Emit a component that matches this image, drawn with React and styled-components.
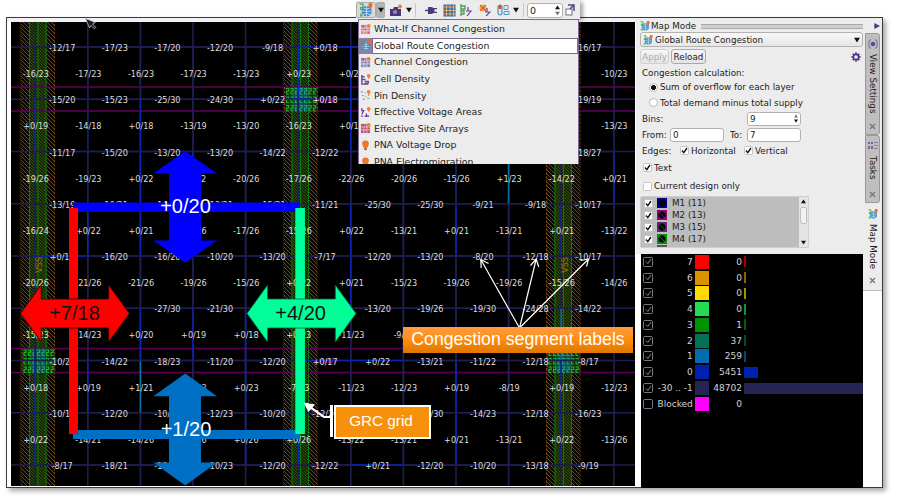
import React from 'react';
import styled, { createGlobalStyle, css } from 'styled-components';

const GlobalStyle = createGlobalStyle`
  * { box-sizing: border-box; }
  body { margin: 0; background: #fff; font-family: "DejaVu Sans", sans-serif; color: #222; overflow: hidden; }
  svg { display: block; flex: none; }
`;

/* ---------- congestion map ---------- */

const COL = (i) => 24.2 + i * 52.6;
const ROW = (i) => 25 + i * 52.25;

/* labels on horizontal edges, one list per grid line; a bare sign and digit colours the edge without a label */
const H_EDGES = [
  '-12/17 -17/23 -17/20 -12/20 -9/18 +0/18 +0 . . . -16/17',
  '-15/20 -15/23 -25/30 -24/30 +0/22 +0/18 +0 . . . -19/19',
  '-11/17 -15/20 -13/20 -13/20 -14/22 -12/22 . . . . -18/27',
  '-13/19 -10/21 -14/21 -13/21 -15/21 -11/21 -25/30 -25/30 -9/21 -9/18 -10/17',
  '+0/19 -16/20 -16/20 -10/20 -13/20 -7/17 -12/20 -13/20 -8/20 -12/18 -10/17',
  '. . -27/30 -21/30 . . -13/20 -19/26 -19/30 -24/28 -14/22',
  '-10/20 -14/22 -18/23 -11/20 -12/20 +0/17 +0/22 -13/21 -11/22 -12/18 -8/17',
  '-10/18 -12/20 -10/20 -12/23 -10/20 -12/20 . -25/30 -14/23 -12/18 -16/23',
  '-8/17 -18/21 -18/21 -10/23 -12/20 -12/22 +0/21 -12/20 -10/20 -13/18 -9/19',
].map((r) => r.split(' '));

/* labels on vertical edges, one list per row of cells */
const V_EDGES = [
  '-16/23 -17/23 -16/23 -17/23 -13/23 +0/23 +0/23 . . . . -10/23',
  '+0/19 -14/18 +0/18 -13/19 -13/20 -16/23 +0/19 . . . . -13/23',
  '-19/26 -19/23 +0/22 +0/22 -20/26 -17/26 -22/26 -20/26 -15/26 +1/23 -14/22 +0/21',
  '-16/24 +0/22 +0/21 -16/26 -17/26 -15/26 +0/22 -13/21 +0/21 -13/21 +0/21 -13/22',
  '-20/26 -21/26 -21/26 -19/26 -15/26 +0/22 +0/21 -15/23 -19/26 -19/26 -15/26 -14/26',
  '-15/23 -14/23 +0/20 +0/19 +0/18 +0/23 -11/23 -9/21 . . +1 .',
  '+0/18 +0/19 +1/21 -10/23 +0/23 -7/23 -11/23 -12/23 +0/19 -8/19 +0/19 -12/23',
  '+0/22 -14/21 -14/26 -15/26 +0/26 +0/26 -13/22 -13/21 +0/21 -13/21 +0/22 -13/26',
].map((r) => r.split(' '));

const edgeColor = (v) => (v.startsWith('+0') ? '#0a24b4' : v.startsWith('+1') ? '#0072a8' : '#1e1e52');

const MapLabel = styled.text`
  font: 8.1px "DejaVu Sans", sans-serif;
  fill: #dedede;
  text-anchor: middle;
`;
const CalloutNumber = styled.text`
  font: 20px "Liberation Sans", Arial, sans-serif;
  fill: ${(p) => p.$ink};
  text-anchor: middle;
`;

function Strap({ x }) {
  return (
    <g>
      <rect x={x} y="0" width="34.5" height="464" fill="url(#brown)" />
      <rect x={x + 8.5} y="0" width="17.5" height="464" fill="url(#green)" />
      <path d={`M${x + 9} 0V464M${x + 17.5} 0V464M${x + 25.5} 0V464`} stroke="#0b7b10" strokeWidth="1" />
      <path d={`M${x + 0.5} 0V464M${x + 34} 0V464`} stroke="#553000" strokeWidth="1" strokeDasharray="1 1" />
    </g>
  );
}

function ViaBlock({ x, y }) {
  const cells = [];
  for (let r = 0; r < 3; r++)
    for (let c = 0; c < 7; c++)
      cells.push(
        <path
          key={`${r}-${c}`}
          d={`M${x + 1.5 + c * 4.5} ${y + 1.5 + r * 8.5}h2.6v2.5h-2v3h2.4`}
          stroke={c > 1 && c < 5 ? '#1f9c8c' : '#18b41c'}
          strokeWidth="1.2"
          fill="none"
        />
      );
  return (
    <g>
      <rect x={x} y={y} width="33" height="24" fill="#123c12" fillOpacity=".75" />
      <rect x={x + 8} y={y} width="17" height="24" fill="#0f5c50" fillOpacity=".75" />
      {cells}
      <path d={`M${x} ${y}v24M${x + 33} ${y}v24`} stroke="#b01c50" strokeDasharray="2 2" />
    </g>
  );
}

function CongestionMap() {
  return (
    <svg width="624" height="464" viewBox="0 0 624 464">
      <defs>
        <pattern id="brown" width="4" height="4" patternUnits="userSpaceOnUse">
          <rect width="4" height="4" fill="#0c0700" />
          <path d="M-1 -1L5 5M-1 3L1 5M3 -1L5 1" stroke="#794604" strokeWidth="1" />
        </pattern>
        <pattern id="green" width="3" height="3" patternUnits="userSpaceOnUse">
          <rect width="3" height="3" fill="#062c04" />
          <path d="M-1 -1L4 4M-1 2L1 4M2 -1L4 1" stroke="#5f4808" strokeWidth=".8" />
        </pattern>
      </defs>
      <rect width="624" height="464" fill="#000" />
      <Strap x={9.5} />
      <Strap x={272} />
      <Strap x={535} />
      <path d="M0 65H624M0 89H624M0 326.5H624M0 350.5H624" stroke="#5e005a" strokeWidth="1.5" />
      <ViaBlock x={11} y={326.5} />
      <ViaBlock x={273.5} y={65} />
      <ViaBlock x={536} y={326.5} />
      <path d="M305 78h19M305 339h19" stroke="#6d0070" strokeWidth="5" strokeDasharray="2 1" />

      <g strokeWidth="1.6" fill="none">
        <path d={ROWS_BASE} stroke="#1e1e52" />
        {V_EDGES.map((row, r) =>
          row.map((v, c) => (
            <path key={`${r}-${c}`} d={`M${COL(c)} ${ROW(r)}V${ROW(r + 1)}`} stroke={edgeColor(v)} />
          ))
        )}
        {H_EDGES.map((row, r) =>
          row.map((v, c) => (
            <path key={`${r}-${c}`} d={`M${COL(c)} ${ROW(r)}H${COL(c + 1)}`} stroke={edgeColor(v)} />
          ))
        )}
      </g>

      <g fill="#a86800" fontFamily="DejaVu Sans" fontSize="8">
        <text transform="translate(31 243) rotate(-90)" textAnchor="middle">VSS</text>
        <text transform="translate(557 243) rotate(-90)" textAnchor="middle">VSS</text>
      </g>

      {H_EDGES.map((row, r) =>
        row.map((v, c) => v.length > 2 && (
          <MapLabel key={`${r}-${c}`} x={COL(c) + 27} y={ROW(r) + 4.2}>{v}</MapLabel>
        ))
      )}
      {V_EDGES.map((row, r) =>
        row.map((v, c) => v.length > 2 && (
          <MapLabel key={`${r}-${c}`} x={COL(c) + 0.6} y={ROW(r) + 30.2}>{v}</MapLabel>
        ))
      )}

      <rect x="62" y="180.5" width="227" height="9.5" fill="#00f" />
      <rect x="62" y="408" width="227" height="9" fill="#0070c4" />
      <rect x="58" y="186" width="9" height="226" fill="#f00" />
      <rect x="284.3" y="186" width="9.6" height="226" fill="#00ff99" />
      <path d="M174.3 129L206 151.6H190V218.4H206L174.3 240.8L142.3 218.4H158V151.6H142.3Z" fill="#00f" />
      <path d="M174.3 351.5L206 374.3H190V440.5H206L174.3 463.5L142.3 440.5H158V374.3H142.3Z" fill="#0070c4" />
      <path d="M9.6 291.5L30.2 263V277H97.6V263L118.4 291.5L97.6 320V306H30.2V320Z" fill="#f00" stroke="#300" strokeWidth=".8" />
      <path d="M236 291.5L256.6 263V277H324.3V263L345 291.5L324.3 320V306H256.6V320Z" fill="#00ff99" stroke="#063" strokeWidth=".8" />
      <CalloutNumber $ink="#fff" x="174.5" y="190.5">+0/20</CalloutNumber>
      <CalloutNumber $ink="#fff" x="175" y="413.8">+1/20</CalloutNumber>
      <CalloutNumber $ink="#111" x="63.5" y="298">+7/18</CalloutNumber>
      <CalloutNumber $ink="#111" x="289.6" y="297.5">+4/20</CalloutNumber>

      <g stroke="#fff" strokeWidth="1.2" fill="none">
        <path d="M508.5 306L469.8 237.5M470.2 246L469.8 237.5L477.5 241.5" />
        <path d="M508.5 306L525.2 237M519.5 243.5L525.2 237L527.7 245" />
        <path d="M508.5 306L577.5 237M569.5 238.5L577.5 237L575.5 244.5" />
      </g>
      <path d="M320 395H313L294.5 381.8" stroke="#fff" strokeWidth="2.2" fill="none" />
      <path d="M292.5 380.5L304 382.5L297.5 390Z" fill="#fff" />
    </svg>
  );
}
const ROWS_BASE =
  H_EDGES.map((_, r) => `M0 ${ROW(r)}H624`).join('') + V_EDGES[0].map((_, c) => `M${COL(c)} 0V464`).join('');

/* ---------- icons ---------- */

const Globe = ({ s = 11 }) => (
  <svg width={s} height={s} viewBox="0 0 12 12">
    <circle cx="6.5" cy="7" r="4.4" fill="#3386c8" />
    <path d="M2.2 7h8.6M6.5 2.7v8.6M3.5 4.3q3 1.5 6 0M3.5 9.7q3-1.5 6 0" stroke="#d5ecf8" strokeWidth=".7" fill="none" />
    <path d="M.5 1h3v3h-2v2M1.5 9v2h2" stroke="#45a849" strokeWidth="1.1" fill="none" />
    <path d="M8 1.7a1.8 1.8 0 113.6 0Q11.4 3.5 9.8 5.2Q8.2 3.5 8 1.7" fill="#f06a25" />
  </svg>
);
const GridIcon = ({ hot }) => (
  <svg width="11" height="11" viewBox="0 0 12 12">
    <rect x="1" y="1" width="10" height="10" fill={hot || '#7d90cb'} />
    <path d="M1 4.3H11M1 7.6H11M4.3 1V11M7.6 1V11" stroke="#e6e0ef" strokeWidth=".8" />
    <path d="M2 2h2v2M8 9h2M5 6h2" stroke="#d64b3a" strokeWidth="1.3" fill="none" />
    <circle cx="9.5" cy="2" r="2" fill="#f28232" />
  </svg>
);
const DotsIcon = ({ kind }) => (
  <svg width="11" height="11" viewBox="0 0 12 12">
    {kind === 'cell' && <path d="M2 1v10h7M2 3h3M2 6h4M5 8h4v2H5" stroke="#6b4591" strokeWidth="1.5" fill="none" />}
    {kind === 'pin' && <path d="M1 2h2M5 3h1M2 6h2M6 7h1M3 10h2M8 9h2M9 6h1" stroke="#7a8f7f" strokeWidth="1.3" />}
    {kind === 'volt' && <path d="M2 1v3h2L2 8M5 10h5M7 7v4M1 10h2" stroke="#5b3b91" strokeWidth="1.3" fill="none" />}
    <path d="M7.5 2a2 2 0 114 0Q11 4 9.5 5.8Q8 4 7.5 2" fill="#f07e3b" />
  </svg>
);
const PinIcon = () => (
  <svg width="11" height="11" viewBox="0 0 12 12">
    <path d="M2.3 4.2a3.7 3.7 0 117.4 0Q9.500 6.500 7.500 9V11h-3V9Q2.500 6.500 2.300 4.200" fill="#ef762c" />
    <path d="M4.700 9.500h2.600v1.500h-2.600z" fill="#a56b4a" />
  </svg>
);
const Gear = () => (
  <svg width="10" height="10" viewBox="0 0 10 10">
    <circle cx="5" cy="5" r="2.7" fill="none" stroke="#52357b" strokeWidth="1.7" />
    <path d="M5 .3v1.7M5 8v1.7M.3 5H2M8 5h1.7M1.7 1.7l1.2 1.2M7.1 7.1l1.2 1.2M8.3 1.7L7.1 2.9M1.7 8.3l1.2-1.2" stroke="#52357b" strokeWidth="1.6" />
  </svg>
);
const Triangle = ({ dir = 'down', size = 6, color = '#111' }) => (
  <svg width={size} height={size} viewBox="0 0 6 6">
    <path d={{ down: 'M0 .8h6L3 5.5z', up: 'M0 5.2h6L3 .5z', right: 'M.3 0v6L6 3z' }[dir]} fill={color} />
  </svg>
);

/* ---------- window ---------- */

const Page = styled.main`
  position: relative;
  width: 900px;
  height: 498px;
  padding: 17px 0 0 6px;
  background: #fff;
`;
const Window = styled.div`
  display: flex;
  width: 877px;
  height: 471px;
  border: 1px solid #3a3a3e;
  background: #fff;
  box-shadow: 3px 3px 5px rgba(0, 0, 0, 0.35);
`;
const MapPane = styled.section`
  position: relative;
  width: 629px;
  padding: 4px 0 0 4px;
  background: linear-gradient(#f2f2f6 0 4px, #fff 4px);
`;
const SidePane = styled.aside`
  display: flex;
  width: 246px;
  height: 470px;
`;
const SideColumn = styled.div`
  width: 227px;
  display: flex;
  flex-direction: column;
`;
const Cursor = styled.svg`
  position: absolute;
  left: 78px;
  top: 0;
`;

const SegmentCallout = styled.div`
  position: absolute;
  left: 396px;
  top: 309px;
  width: 230px;
  height: 26px;
  line-height: 25px;
  text-align: center;
  white-space: nowrap;
  color: #fff;
  font-family: "Liberation Sans", Arial, sans-serif;
  font-size: 17.7px;
  background: linear-gradient(#ff9c45, #ff8c0a 50%, #de7600);
`;
const GridCallout = styled.div`
  position: absolute;
  left: 323px;
  top: 387px;
  display: flex;
  gap: 1px;
  height: 34px;
`;
const CalloutBar = styled.span`
  width: 3px;
  height: 32px;
  background: #fff;
`;
const CalloutBox = styled.div`
  width: 97px;
  padding-right: 3px;
  border: 2px solid #fff;
  background: #f7900a;
  color: #fff;
  font: 15.3px/27px "Liberation Sans", Arial, sans-serif;
  text-align: center;
`;

/* ---------- map mode panel ---------- */

const Panel = styled.div`
  height: 236px;
  padding: 2px 0 0 4px;
  background: #ececec;
  font-size: 8.75px;
`;
const Line = styled.div`
  display: flex;
  align-items: center;
  height: ${(p) => p.$h}px;
  padding-left: ${(p) => p.$indent || 0}px;
  gap: ${(p) => p.$gap ?? 3}px;
  white-space: nowrap;
`;
const Grip = styled.span`
  flex: 1;
  height: 5px;
  margin-left: 4px;
  background: #cfcfcf;
  border: solid #aaa;
  border-width: 1px 0;
`;
const control = css`
  border: 1px solid #b4b2b0;
  border-radius: 3px;
`;
const Combo = styled.div`
  ${control}
  display: flex;
  align-items: center;
  gap: 2px;
  width: 223px;
  height: 15px;
  padding: 0 2px;
  background: linear-gradient(#f8f8f8, #e6e6e6);
`;
const Fill = styled.span`flex: 1;`;
const Button = styled.button`
  ${control}
  height: 15px;
  width: ${(p) => p.$w}px;
  padding: 0;
  font: 8.75px "DejaVu Sans", sans-serif;
  background: linear-gradient(#f6f6f6, #e4e4e4);
  color: #222;
  border-color: #aaa;
  &:disabled { color: #aaa; border-color: #d0d0d0; }
`;
const Radio = styled.span`
  width: 9px;
  height: 9px;
  border: 1px solid #bbb;
  border-radius: 50%;
  background: ${(p) => (p.$on ? 'radial-gradient(#111 0 2.2px, #fff 2.7px)' : '#fff')};
`;
const Field = styled.span`
  ${control}
  display: flex;
  align-items: center;
  justify-content: space-between;
  width: 54px;
  height: 14px;
  padding: 0 2px;
  background: #fff;
`;
const Spin = styled.span`
  display: flex;
  flex-direction: column;
  gap: 1px;
`;
const Caption = styled.span`
  width: ${(p) => p.$w}px;
`;
const BoxFrame = styled.span`
  display: flex;
  flex: none;
  align-items: center;
  justify-content: center;
  width: ${(p) => (p.$dark ? 10 : 9)}px;
  height: ${(p) => (p.$dark ? 10 : 9)}px;
  border: 1px solid ${(p) => (p.$dark ? '#77778c' : '#c4c4c4')};
  border-radius: 1.5px;
  background: ${(p) => (p.$dark ? '#000' : '#fff')};
`;
function Check({ on = true, dark }) {
  return (
    <BoxFrame $dark={dark}>
      {on && (
        <svg width="7" height="7" viewBox="0 0 7 7">
          <path d="M1 3.5L2.8 5.6L6 1" stroke={dark ? '#8c8c5c' : '#111'} strokeWidth={dark ? 1 : 1.4} fill="none" />
        </svg>
      )}
    </BoxFrame>
  );
}

const LayerBox = styled.div`
  display: flex;
  width: 169px;
  height: 52px;
  margin-top: 1px;
  border: 1px solid #cfcfcf;
  border-radius: 2px;
  background: #bdbdbd;
  overflow: hidden;
`;
const LayerList = styled.div`
  flex: 1;
  padding: 0 0 0 3px;
`;
const HiddenLayer = styled.div`
  width: 10px;
  height: 2px;
  margin-left: 13px;
  background: #555;
`;
const Swatch = styled.span`
  width: 10px;
  height: 10px;
  margin: 0 2px 0 1px;
  border: 1px solid ${(p) => p.$c};
  background: linear-gradient(45deg, transparent 45%, ${(p) => p.$c} 45% 55%, transparent 55%),
    radial-gradient(#000 0 3px, ${(p) => p.$c} 4px);
`;
const ScrollTrack = styled.div`
  display: flex;
  flex-direction: column;
  align-items: center;
  justify-content: space-between;
  width: 9px;
  padding: 2px 0;
  background: #e4e4e4;
`;
const Thumb = styled.span`
  width: 7px;
  height: 17px;
  margin: 0 0 14px;
  border: 1px solid #c0c0c0;
  border-radius: 2px;
  background: #f2f2f2;
`;

/* ---------- legend ---------- */

const Legend = styled.div`
  flex: 1;
  width: 222px;
  margin-left: 5px;
  background: #000;
  color: #d2d2d2;
  font-size: 9px;
`;
const LegendRow = styled.div`
  display: grid;
  grid-template-columns: 10px 37.5px 14px 30.5px 119px;
  column-gap: 2.3px;
  align-items: center;
  height: 15.78px;
  padding-left: 2px;
`;
const Num = styled.span`
  justify-self: end;
  white-space: nowrap;
`;
const Chip = styled.span`
  height: 14px;
  background: ${(p) => p.$c};
`;
const Bar = styled.span`
  height: 11px;
  width: ${(p) => p.$w}px;
  background: ${(p) => p.$c};
  opacity: ${(p) => (p.$w < 3 ? 0.65 : 1)};
`;
const BINS = [
  ['7', '#ff0000', '0', 1.5],
  ['6', '#db9200', '0', 1.5],
  ['5', '#ffdb00', '0', 1.5],
  ['4', '#24db56', '0', 1.5],
  ['3', '#009200', '1', 1.5],
  ['2', '#007356', '37', 1.5],
  ['1', '#006db0', '259', 1.5],
  ['0', '#0020b0', '5451', 14],
  ['-30 .. -1', '#242455', '48702', 119],
  ['Blocked', '#ff00ff', '0', 0],
];

/* ---------- vertical tabs ---------- */

const TabRail = styled.nav`
  width: 19px;
  height: 273px;
  padding: 5px 0 0 2px;
  background: #ececec;
  border-bottom: 1px solid #bbb;
`;
const RailHandle = styled.div`
  display: flex;
  height: 10px;
  padding-left: 9px;
`;
const Tab = styled.div`
  display: flex;
  flex-direction: column;
  align-items: center;
  width: 15px;
  height: ${(p) => p.$h}px;
  padding: 5px 0 4px;
  gap: 5px;
  border: 1px solid ${(p) => (p.$on ? '#ececec' : '#999')};
  border-radius: 0 3px 3px 0;
  background: ${(p) => (p.$on ? '#ececec' : '#bfbfbf')};
  font-size: 8.75px;
`;
const TabName = styled.span`
  writing-mode: vertical-rl;
  white-space: nowrap;
  line-height: 12px;
  flex: 1;
`;
const Close = () => (
  <svg width="7" height="7" viewBox="0 0 7 7"><path d="M1 1l5 5M6 1L1 6" stroke="#777" strokeWidth="1.4" /></svg>
);

/* ---------- toolbar and popup ---------- */

const Popup = styled.div`
  position: absolute;
  left: 356px;
  top: 1px;
  width: 224px;
`;
const Toolbar = styled.div`
  display: flex;
  align-items: center;
  height: 18px;
  width: 224px;
  background: #ececec;
  box-shadow: 3px 1px 4px rgba(0, 0, 0, 0.35);
`;
const Tool = styled.span`
  display: flex;
  align-items: center;
  justify-content: center;
  width: ${(p) => p.$w || 18}px;
  height: 16px;
  ${(p) => p.$down && css`background: ${p.$down}; border: 1px solid #aaa; border-radius: 2px;`}
`;
const Divider = styled.span`
  width: 1px;
  height: 14px;
  margin: 0 3px;
  background: #c8c8c8;
`;
const Menu = styled.div`
  position: relative;
  width: 221px;
  height: 145px;
  margin-left: 2px;
  padding-top: 1px;
  background: #ececec;
  border: solid #796a98;
  border-width: 1px 1.5px 0 1px;
  overflow: hidden;
`;
const MenuItem = styled.div`
  display: flex;
  align-items: center;
  height: 16.6px;
  font-size: 9.35px;
  white-space: nowrap;
`;
const MenuIcon = styled.span`
  display: flex;
  align-items: center;
  justify-content: center;
  width: 13px;
  height: 16px;
  background: ${(p) => (p.$on ? '#8d81a2' : 'transparent')};
`;
const MenuText = styled.span`
  flex: 1;
  height: 16px;
  line-height: 14px;
  padding-left: 1px;
  border: 1px solid ${(p) => (p.$on ? '#796a98' : 'transparent')};
  background: ${(p) => (p.$on ? '#fff' : 'transparent')};
`;
const MENU = [
  ['What-If Channel Congestion', <GridIcon hot="#d58a91" />],
  ['Global Route Congestion', <Globe />],
  ['Channel Congestion', <GridIcon />],
  ['Cell Density', <DotsIcon kind="cell" />],
  ['Pin Density', <DotsIcon kind="pin" />],
  ['Effective Voltage Areas', <DotsIcon kind="volt" />],
  ['Effective Site Arrays', <GridIcon hot="#bb5577" />],
  ['PNA Voltage Drop', <PinIcon />],
  ['PNA Electromigration', <PinIcon />],
];

function ModePopup() {
  return (
    <Popup>
      <Toolbar>
        <Tool $w={20} $down="#d9d9d9"><Globe s={14} /></Tool>
        <Tool $w={9} $down="#b5b5b5"><Triangle /></Tool>
        <Tool $w={20}>
          <svg width="13" height="13" viewBox="0 0 13 13">
            <path d="M1 5h3l1-2h4v2h3v7H1z" fill="#4d347c" /><circle cx="6" cy="8" r="2" fill="#998bb4" />
            <circle cx="11" cy="2.5" r="2" fill="#f07a35" />
          </svg>
        </Tool>
        <Tool $w={7}><Triangle /></Tool>
        <Divider />
        <Tool $w={23}>
          <svg width="12" height="9" viewBox="0 0 12 9"><path d="M0 4.5h3M8 2.7h4M8 6.3h4" stroke="#51397d" strokeWidth="1.3" /><path d="M3 1h3.5q3 .5 3 3.5t-3 3.5H3z" fill="#51397d" /></svg>
        </Tool>
        <Tool $w={14}>
          <svg width="13" height="13" viewBox="0 0 13 13"><rect x=".5" y=".5" width="12" height="12" fill="#3c6b9b" /><path d="M1 3h11M1 6.5h11M1 10h11M3.5 1v11M7 1v11M10.5 1v11" stroke="#dfad78" /></svg>
        </Tool>
        <Tool $w={20}>
          <svg width="12" height="12" viewBox="0 0 12 12"><path d="M1 0v12M1 2h4v3H1M1 7h3v3H1" stroke="#4b9b58" strokeWidth="1.3" fill="none" /><path d="M8 3v4h3L7 12M6 7h3" stroke="#664798" fill="none" strokeWidth="1.2" /></svg>
        </Tool>
        <Tool $w={18}>
          <svg width="12" height="12" viewBox="0 0 12 12"><circle cx="4" cy="4" r="3.5" fill="#f3a33b" /><path d="M1 1l6 6M7 1L1 7" stroke="#d9432f" /><path d="M8 4v4h3L7 12M6 8h3" stroke="#664798" fill="none" strokeWidth="1.2" /></svg>
        </Tool>
        <Tool>
          <svg width="13" height="12" viewBox="0 0 13 12"><rect x="1" y="1" width="4" height="10" rx="2" fill="#d8eaf3" stroke="#3383ad" /><path d="M1.5 1h3v4h-3z" fill="#df4b34" /><path d="M7 1.5h4v4H7zM7 7.5h5v3H7z" fill="none" stroke="#4f9ac0" /></svg>
        </Tool>
        <Tool $w={8}><Triangle /></Tool>
        <Divider />
        <SpinField>0<Spin><Triangle dir="up" size={5} /><Triangle size={5} color="#777" /></Spin></SpinField>
        <Tool $w={14}>
          <svg width="10" height="12" viewBox="0 0 10 12"><rect x="1" y="5" width="6" height="6" fill="#fff" stroke="#776b94" /><path d="M3 1h6v6M9 1L5 5" stroke="#56417d" strokeWidth="1.5" fill="none" /></svg>
        </Tool>
      </Toolbar>
      <Menu>
        {MENU.map(([name, icon], i) => (
          <MenuItem key={name}>
            <MenuIcon $on={i === 1}>{icon}</MenuIcon>
            <MenuText $on={i === 1}>{name}</MenuText>
          </MenuItem>
        ))}
      </Menu>
    </Popup>
  );
}
const SpinField = styled(Field)`
  width: 36px;
  height: 15px;
  font-size: 9.5px;
`;

function MapModePanel() {
  return (
    <Panel>
      <Line $h={12} $gap={1}><Globe s={10} />Map Mode<Grip /></Line>
      <Combo><Globe s={10} /><span>Global Route Congestion</span><Fill /><Triangle /></Combo>
      <Line $h={19} $gap={2}>
        <Button $w={29} disabled>Apply</Button>
        <Button $w={35}>Reload</Button>
        <Fill /><Gear /><Caption $w={0} />
      </Line>
      <Line $h={14} $indent={2}>Congestion calculation:</Line>
      <Line $h={14} $indent={9} $gap={2}><Radio $on />Sum of overflow for each layer</Line>
      <Line $h={17} $indent={9} $gap={2}><Radio />Total demand minus total supply</Line>
      <Line $h={15} $indent={2} $gap={0}>
        <Caption $w={105}>Bins:</Caption>
        <Field>9<Spin><Triangle dir="up" size={4} color="#777" /><Triangle size={4} /></Spin></Field>
      </Line>
      <Line $h={17} $indent={2} $gap={0}>
        <Caption $w={28}>From:</Caption><Field>0</Field>
        <Caption $w={6} /><Caption $w={17}>To:</Caption><Field>7</Field>
      </Line>
      <Line $h={15} $indent={2} $gap={2}>
        <Caption $w={36}>Edges:</Caption><Check />
        <Caption $w={51}>Horizontal</Caption><Check />Vertical
      </Line>
      <Line $h={19} $indent={3} $gap={2}><Check />Text</Line>
      <Line $h={18} $indent={3} $gap={2}><Check on={false} />Current design only</Line>
      <LayerBox>
        <LayerList>
          {[['M1 (11)', '#00008c'], ['M2 (13)', '#92007a'], ['M3 (15)', '#602870'], ['M4 (17)', '#009200']].map(([n, c]) => (
            <Line key={n} $h={12.1}><Check /><Swatch $c={c} />{n}</Line>
          ))}
          <HiddenLayer />
        </LayerList>
        <ScrollTrack><Triangle dir="up" size={5} /><Thumb /><Triangle size={5} /></ScrollTrack>
      </LayerBox>
    </Panel>
  );
}

export default function App() {
  return (
    <Page>
      <GlobalStyle />
      <Window>
        <MapPane>
          <CongestionMap />
          <SegmentCallout>Congestion segment labels</SegmentCallout>
          <GridCallout><CalloutBar /><CalloutBox>GRC grid</CalloutBox></GridCallout>
          <Cursor width="12" height="12" viewBox="0 0 12 12">
            <path d="M.6 .5L10.300 4.500L7.500 6L10.800 9.300L9.300 10.800L6 7.500L4.500 10Z" fill="#1a1a1a" stroke="#c8c8c8" strokeWidth=".8" />
          </Cursor>
        </MapPane>
        <SidePane>
          <SideColumn>
            <MapModePanel />
            <Legend>
              {BINS.map(([n, c, count, w], i) => (
                <LegendRow key={n}>
                  <Check dark on={i < 9} />
                  <Num>{n}</Num>
                  <Chip $c={c} />
                  <Num>{count}</Num>
                  <Bar $c={c} $w={w} />
                </LegendRow>
              ))}
            </Legend>
          </SideColumn>
          <TabRail>
            <RailHandle><Triangle dir="right" color="#52357b" /></RailHandle>
            <Tab $h={102}>
              <svg width="10" height="10" viewBox="0 0 10 10"><path d="M3 .5L1 2v6l2 1.5M7 .5L9 2v6L7 9.5" stroke="#8a78aa" strokeWidth="1.2" fill="none" /><circle cx="5" cy="5" r="2.3" fill="#63488e" /></svg>
              <TabName>View Settings</TabName><Close />
            </Tab>
            <Tab $h={68}>
              <svg width="10" height="10" viewBox="0 0 10 10"><path d="M1 1v2M1 5v3M4 1v2M4 5v3" stroke="#63488e" strokeWidth="1.5" /><path d="M6 1.5h4M6 4.5h4M6 7.5h4" stroke="#8a78aa" /></svg>
              <TabName>Tasks</TabName><Close />
            </Tab>
            <Tab $h={86} $on>
              <Globe s={10} /><TabName>Map Mode</TabName><Close />
            </Tab>
          </TabRail>
        </SidePane>
      </Window>
      <ModePopup />
    </Page>
  );
}
